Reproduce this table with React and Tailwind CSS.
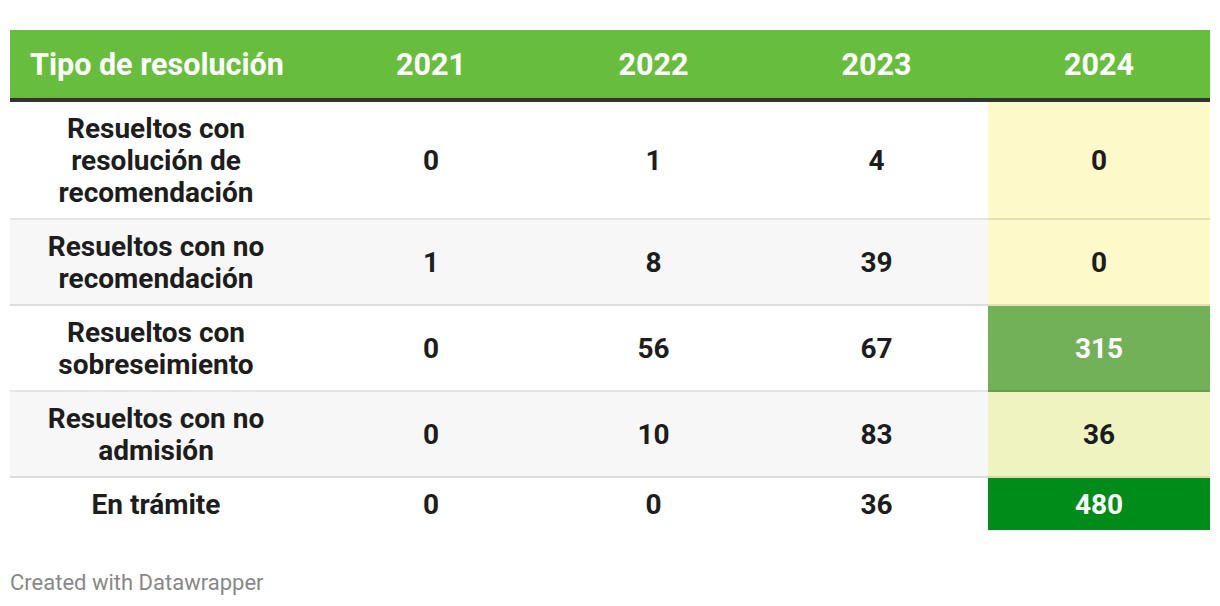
const YEARS = ['2021', '2022', '2023', '2024'];

const ROWS = [
  { label: 'Resueltos con resolución de recomendación', values: [0, 1, 4, 0], last: 'bg-[#fef9c9] text-[#1d1d1d]' },
  { label: 'Resueltos con no recomendación', values: [1, 8, 39, 0], last: 'bg-[#fef9c9] text-[#1d1d1d]', shaded: true },
  { label: 'Resueltos con sobreseimiento', values: [0, 56, 67, 315], last: 'bg-[#72b157] text-white' },
  { label: 'Resueltos con no admisión', values: [0, 10, 83, 36], last: 'bg-[#eef3c0] text-[#1d1d1d]', shaded: true },
  { label: 'En trámite', values: [0, 0, 36, 480], last: 'bg-[#008c18] text-white', end: true },
];

const cols = 'grid grid-cols-[310px_222px_223px_223px_222px]';

export default function App() {
  return (
    <div className="bg-white min-h-screen pt-[30px] px-[10px] font-['Roboto',sans-serif] text-[#1d1d1d]">
      <div className={`${cols} bg-[#67be3c] text-white font-bold text-[30.5px] leading-[34px] h-[72px] pt-[2px] border-b-4 border-[#333333]`}>
        <div className="flex items-center pl-[20px]">Tipo de resolución</div>
        {YEARS.map(y => (
          <div key={y} className="flex items-center justify-center">{y}</div>
        ))}
      </div>

      {ROWS.map((row, idx) => (
        <div key={idx} className={`${cols} font-bold text-[28px] leading-[32px]`}>
          <div className={`flex items-center justify-center text-center pl-[10px] pr-[28px] pt-[11px] pb-[9px] ${row.shaded ? 'bg-[#f7f7f7]' : 'bg-white'} ${row.end ? '' : 'border-b-2 border-black/10'}`}>
            {row.label}
          </div>
          {row.values.map((v, i) => (
            <div
              key={i}
              className={`flex items-center justify-center pt-[11px] pb-[9px] ${i === 3 ? row.last : row.shaded ? 'bg-[#f7f7f7]' : 'bg-white'} ${row.end ? '' : 'border-b-2 border-black/10'}`}
            >
              {v}
            </div>
          ))}
        </div>
      ))}

      <p className="mt-[40px] text-[22px] leading-[26px] text-[#888888] font-normal">Created with Datawrapper</p>
    </div>
  );
}
